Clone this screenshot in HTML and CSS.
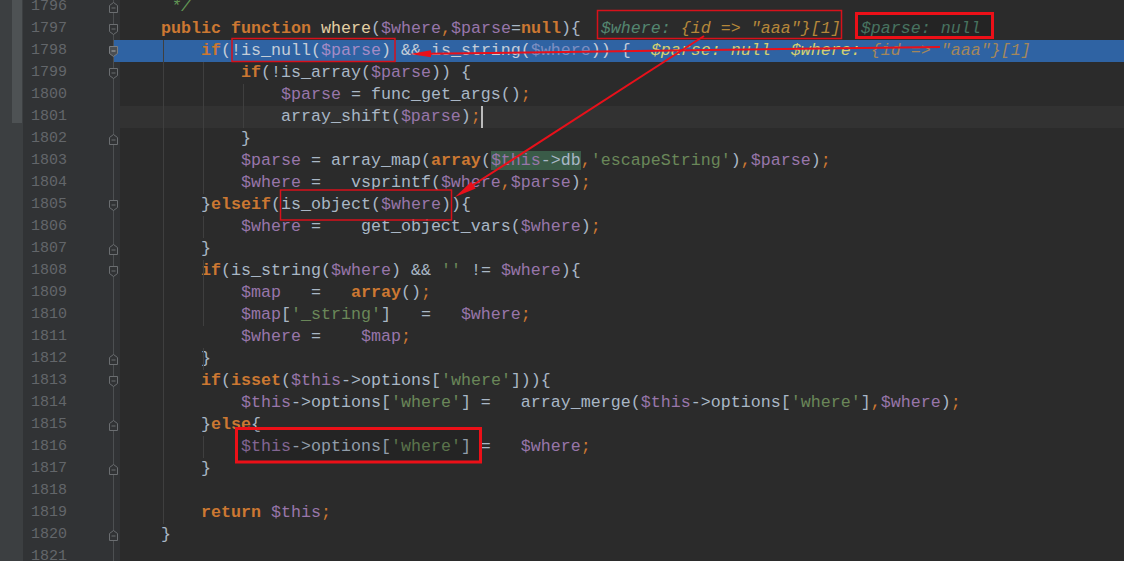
FILE: index.html
```html
<!DOCTYPE html>
<html lang="en">
<head>
  <meta charset="UTF-8">
  <title>Model.class.php - where()</title>
  <link rel="stylesheet" href="styles.css">
</head>
<body>
  <svg class="defs" width="0" height="0">
    <symbol id="fold-start" viewBox="0 0 11 13">
      <path d="M1.5 1.5H9.5V8.5L5.5 11.5L1.5 8.5Z" fill="#313335" stroke="#6b6e71"/>
      <path d="M3.5 6H7.5" stroke="#6b6e71"/>
    </symbol>
    <symbol id="fold-end" viewBox="0 0 11 13">
      <path d="M1.5 11.5H9.5V4.5L5.5 1.5L1.5 4.5Z" fill="#313335" stroke="#6b6e71"/>
      <path d="M3.5 7H7.5" stroke="#6b6e71"/>
    </symbol>
    <symbol id="fold-exec" viewBox="0 0 11 13">
      <path d="M1.5 1.5H9.5V8.5L5.5 11.5L1.5 8.5Z" fill="#4b4e51" stroke="#7a7d80"/>
      <path d="M3.5 6H7.5" stroke="#a9acaf"/>
    </symbol>
  </svg>

  <div class="strip"><div class="thumb"></div></div>

  <div class="editor">
    <div class="row"><span class="num">1796</span><span class="fold"><svg><use href="#fold-end"/></svg></span><span class="code">     <span class="c">*/</span></span></div>
    <div class="row"><span class="num">1797</span><span class="fold"><svg><use href="#fold-start"/></svg></span><span class="code">    <span class="k">public</span> <span class="k">function</span> <span class="f">where</span>(<span class="v">$where</span><span class="p">,</span><span class="v">$parse</span>=<span class="k">null</span>){  <span class="hn">$where:</span> <span class="hv">{id =&gt; "aaa"}[1]</span>  <span class="hn">$parse: null</span></span></div>
    <div class="row exec"><span class="num">1798</span><span class="fold"><svg><use href="#fold-exec"/></svg></span><span class="code">        <span class="k">if</span>(!is_null(<span class="v">$parse</span>) &amp;&amp; is_string(<span class="v2">$where</span>)) {  <span class="ha">$parse: null</span>  <span class="ha">$where:</span> <span class="hb">{id =&gt; "aaa"}[1]</span></span></div>
    <div class="row"><span class="num">1799</span><span class="fold"><svg><use href="#fold-start"/></svg></span><span class="code">            <span class="k">if</span>(!is_array(<span class="v">$parse</span>)) {</span></div>
    <div class="row"><span class="num">1800</span><span class="fold"></span><span class="code">                <span class="v">$parse</span> = func_get_args()<span class="p">;</span></span></div>
    <div class="row cur"><span class="num">1801</span><span class="fold"></span><span class="code">                array_shift(<span class="v">$parse</span>)<span class="p">;</span><span class="caret"></span></span></div>
    <div class="row"><span class="num">1802</span><span class="fold"><svg><use href="#fold-end"/></svg></span><span class="code">            }</span></div>
    <div class="row"><span class="num">1803</span><span class="fold"></span><span class="code">            <span class="v">$parse</span> = array_map(<span class="k">array</span>(<span class="hl"><span class="v">$this</span>-&gt;db</span><span class="p">,</span><span class="s">'escapeString'</span>)<span class="p">,</span><span class="v">$parse</span>)<span class="p">;</span></span></div>
    <div class="row"><span class="num">1804</span><span class="fold"></span><span class="code">            <span class="v">$where</span> =   vsprintf(<span class="v">$where</span><span class="p">,</span><span class="v">$parse</span>)<span class="p">;</span></span></div>
    <div class="row"><span class="num">1805</span><span class="fold"><svg><use href="#fold-start"/></svg></span><span class="code">        }<span class="k">elseif</span>(is_object(<span class="v">$where</span>)){</span></div>
    <div class="row"><span class="num">1806</span><span class="fold"></span><span class="code">            <span class="v">$where</span> =    get_object_vars(<span class="v">$where</span>)<span class="p">;</span></span></div>
    <div class="row"><span class="num">1807</span><span class="fold"><svg><use href="#fold-end"/></svg></span><span class="code">        }</span></div>
    <div class="row"><span class="num">1808</span><span class="fold"><svg><use href="#fold-start"/></svg></span><span class="code">        <span class="k">if</span>(is_string(<span class="v">$where</span>) &amp;&amp; <span class="s">''</span> != <span class="v">$where</span>){</span></div>
    <div class="row"><span class="num">1809</span><span class="fold"></span><span class="code">            <span class="v">$map</span>   =   <span class="k">array</span>()<span class="p">;</span></span></div>
    <div class="row"><span class="num">1810</span><span class="fold"></span><span class="code">            <span class="v">$map</span>[<span class="s">'_string'</span>]   =   <span class="v">$where</span><span class="p">;</span></span></div>
    <div class="row"><span class="num">1811</span><span class="fold"></span><span class="code">            <span class="v">$where</span> =    <span class="v">$map</span><span class="p">;</span></span></div>
    <div class="row"><span class="num">1812</span><span class="fold"><svg><use href="#fold-end"/></svg></span><span class="code">        }</span></div>
    <div class="row"><span class="num">1813</span><span class="fold"><svg><use href="#fold-start"/></svg></span><span class="code">        <span class="k">if</span>(<span class="k">isset</span>(<span class="v">$this</span>-&gt;options[<span class="s">'where'</span>])){</span></div>
    <div class="row"><span class="num">1814</span><span class="fold"></span><span class="code">            <span class="v">$this</span>-&gt;options[<span class="s">'where'</span>] =   array_merge(<span class="v">$this</span>-&gt;options[<span class="s">'where'</span>]<span class="p">,</span><span class="v">$where</span>)<span class="p">;</span></span></div>
    <div class="row"><span class="num">1815</span><span class="fold"><svg><use href="#fold-end"/></svg></span><span class="code">        }<span class="k">else</span>{</span></div>
    <div class="row"><span class="num">1816</span><span class="fold"></span><span class="code">            <span class="v">$this</span>-&gt;options[<span class="s">'where'</span>] =   <span class="v">$where</span><span class="p">;</span></span></div>
    <div class="row"><span class="num">1817</span><span class="fold"><svg><use href="#fold-end"/></svg></span><span class="code">        }</span></div>
    <div class="row"><span class="num">1818</span><span class="fold"></span><span class="code"></span></div>
    <div class="row"><span class="num">1819</span><span class="fold"></span><span class="code">        <span class="k">return</span> <span class="v">$this</span><span class="p">;</span></span></div>
    <div class="row"><span class="num">1820</span><span class="fold"><svg><use href="#fold-end"/></svg></span><span class="code">    }</span></div>
    <div class="row"><span class="num">1821</span><span class="fold"></span><span class="code"></span></div>
  </div>

  <!-- indent guides and the red screenshot annotations -->
  <svg class="marks" width="1124" height="561" viewBox="0 0 1124 561">
    <g stroke="#3f3f3f" stroke-width="1">
      <path d="M163.5 40V524"/>
      <path d="M203.5 62V194M203.5 216V238M203.5 260V326M203.5 348V370M203.5 436V458"/>
      <path d="M243.5 84V128"/>
    </g>
    <g fill="none" stroke="#d8111b" stroke-width="1.5">
      <rect x="597.5" y="10.5" width="244" height="28"/>
      <rect x="232" y="38.5" width="163" height="23"/>
      <rect x="280.5" y="190" width="171" height="30"/>
    </g>
    <g fill="rgba(0,0,0,0.14)" stroke="#ec1018" stroke-width="3">
      <rect x="856.5" y="13.5" width="136" height="24"/>
      <rect x="236.5" y="428.5" width="244" height="33.5"/>
    </g>
    <g stroke="#e8101a" stroke-width="2" fill="#e8101a">
      <path d="M940 47L428 53.8"/>
      <polygon points="410,54 431,50.3 431,57.3" stroke="none"/>
      <path d="M704 36L470 187"/>
      <polygon points="455,197 475.7,188.5 471.3,181.7" stroke="none"/>
    </g>
  </svg>
</body>
</html>
```

FILE: styles.css
```css
body {
  margin: 0;
  height: 561px;
  overflow: hidden;
  display: flex;
  position: relative;
  background-color: #2b2b2b;
}

.defs {
  position: absolute;
}

.strip {
  width: 23px;
  flex: none;
  background-color: #3c3f41;
}

.thumb {
  margin-left: 12px;
  width: 10px;
  height: 123px;
  background-color: #4e5254;
}

.editor {
  flex: 1;
  margin-top: -4px;
}

.row {
  display: flex;
  height: 22px;
}

.num {
  width: 45px;
  flex: none;
  box-sizing: border-box;
  padding-right: 1px;
  text-align: right;
  background-color: #313335;
  color: #63666a;
  font: 15px/22px "Liberation Mono", monospace;
}

.fold {
  width: 52px;
  flex: none;
  box-sizing: border-box;
  padding-right: 1px;
  display: flex;
  align-items: center;
  justify-content: flex-end;
  background: linear-gradient(#4c4f51, #4c4f51) no-repeat 45px 0 / 1px 100%, #313335;
}

.fold svg {
  width: 11px;
  height: 13px;
}

.code {
  flex: 1;
  padding-left: 1px;
  white-space: pre;
  color: #a9b7c6;
  font: 16.667px/22px "Liberation Mono", monospace;
}

.cur .code {
  background-color: #323232;
}

.exec .fold {
  background: linear-gradient(#4c4f51, #4c4f51) no-repeat 45px 0 / 1px 100%,
    linear-gradient(to right, #313335 45px, #2f63a3 45px);
}

.exec .code {
  background-color: #2f63a3;
  color: #c4cdd8;
}

.k {
  color: #cc7832;
  font-weight: bold;
}

.p {
  color: #cc7832;
}

.v {
  color: #9876aa;
}

.exec .v {
  color: #a48bc6;
}

.v2 {
  color: #7d8fc2;
}

.s {
  color: #6a8759;
}

.f {
  color: #e3cfa4;
}

.c {
  color: #629755;
  font-style: italic;
}

.hl {
  background-color: #3a5b48;
}

.hn {
  color: #548670;
  font-style: italic;
}

.hv {
  color: #b5873a;
  font-style: italic;
}

.ha {
  color: #d4d172;
  font-style: italic;
}

.hb {
  color: #a3875c;
  font-style: italic;
}

.caret {
  display: inline-block;
  width: 2px;
  height: 22px;
  vertical-align: top;
  background-color: #bbbbbb;
}

.marks {
  position: absolute;
  top: 0;
  left: 0;
  pointer-events: none;
}
```
